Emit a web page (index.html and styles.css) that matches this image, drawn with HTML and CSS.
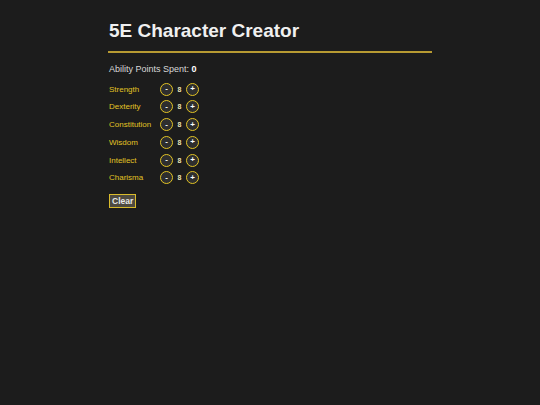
FILE: index.html
```html
<!DOCTYPE html>
<html>
<head>
<meta charset="utf-8">
<link rel="stylesheet" href="styles.css">
</head>
<body>
<div class="app">
  <h1 class="title">5E Character Creator</h1>
  <div class="rule"></div>
  <p class="spent">Ability Points Spent: <b>0</b></p>
  <div class="abilities">
    <div class="row"><span class="name">Strength</span><button class="circle">-</button><span class="val">8</span><button class="circle">+</button></div>
    <div class="row"><span class="name">Dexterity</span><button class="circle">-</button><span class="val">8</span><button class="circle">+</button></div>
    <div class="row"><span class="name">Constitution</span><button class="circle">-</button><span class="val">8</span><button class="circle">+</button></div>
    <div class="row"><span class="name">Wisdom</span><button class="circle">-</button><span class="val">8</span><button class="circle">+</button></div>
    <div class="row"><span class="name">Intellect</span><button class="circle">-</button><span class="val">8</span><button class="circle">+</button></div>
    <div class="row"><span class="name">Charisma</span><button class="circle">-</button><span class="val">8</span><button class="circle">+</button></div>
  </div>
  <button class="clear">Clear</button>
</div>
</body>
</html>
```

FILE: styles.css
```css
html, body {
  margin: 0;
  padding: 0;
  background: #1c1c1c;
  font-family: "Liberation Sans", Arial, sans-serif;
  color: #e6e6e6;
}
.app {
  width: 60%;
  margin: 0 auto;
  padding-top: 19px;
}
.title {
  margin: 0;
  font-size: 19px;
  font-weight: bold;
  color: #f0f0f0;
  line-height: 24px;
  padding-left: 1px;
}
.rule {
  height: 2px;
  background: #b79a32;
  margin-top: 8px;
}
.spent {
  margin: 10px 0 0;
  padding-left: 1px;
  font-size: 9px;
  line-height: 12px;
  color: #d8d8d8;
}
.spent b { color: #fff; }
.abilities {
  margin-top: 7px;
  display: flex;
  flex-direction: column;
  gap: 3.75px;
}
.row {
  display: flex;
  align-items: center;
  height: 14px;
  padding-left: 1px;
}
.name {
  width: 51px;
  font-size: 8px;
  color: #e2c324;
}
.circle {
  width: 13px;
  height: 13px;
  border-radius: 50%;
  border: 1px solid #e2c324;
  background: #2e2e2e;
  color: #fff;
  font-family: "Liberation Sans", Arial, sans-serif;
  font-size: 8px;
  font-weight: bold;
  padding: 0;
  display: flex;
  align-items: center;
  justify-content: center;
  line-height: 1;
}
.val {
  width: 13px;
  text-align: center;
  font-size: 7px;
  font-weight: bold;
  color: #ebe2b4;
}
.clear {
  margin-top: 9px;
  margin-left: 1px;
  font-family: "Liberation Sans", Arial, sans-serif;
  font-size: 8.5px;
  font-weight: bold;
  color: #e8e8e8;
  background: #4e4a40;
  border: 1px solid #d9bb2c;
  padding: 1px 2px;
  height: 14px;
}
```
